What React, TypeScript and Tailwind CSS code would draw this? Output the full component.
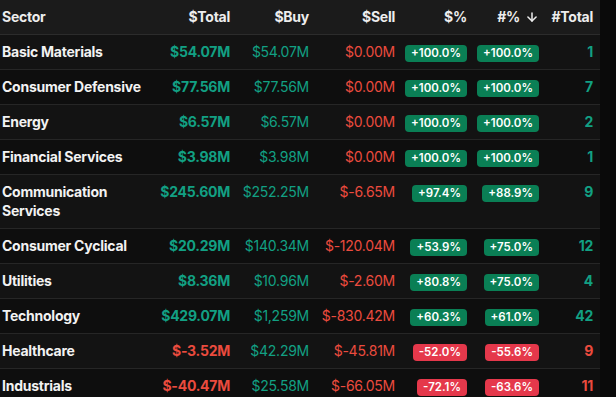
import { ArrowDown } from 'lucide-react';

interface SectorRow {
  sector: string;
  total: string;
  buy: string;
  sell: string;
  pct: number;
  cntPct: number;
  count: number;
}

const rows: SectorRow[] = [
  { sector: 'Basic Materials', total: '$54.07M', buy: '$54.07M', sell: '$0.00M', pct: 100, cntPct: 100, count: 1 },
  { sector: 'Consumer Defensive', total: '$77.56M', buy: '$77.56M', sell: '$0.00M', pct: 100, cntPct: 100, count: 7 },
  { sector: 'Energy', total: '$6.57M', buy: '$6.57M', sell: '$0.00M', pct: 100, cntPct: 100, count: 2 },
  { sector: 'Financial Services', total: '$3.98M', buy: '$3.98M', sell: '$0.00M', pct: 100, cntPct: 100, count: 1 },
  { sector: 'Communication Services', total: '$245.60M', buy: '$252.25M', sell: '$-6.65M', pct: 97.4, cntPct: 88.9, count: 9 },
  { sector: 'Consumer Cyclical', total: '$20.29M', buy: '$140.34M', sell: '$-120.04M', pct: 53.9, cntPct: 75, count: 12 },
  { sector: 'Utilities', total: '$8.36M', buy: '$10.96M', sell: '$-2.60M', pct: 80.8, cntPct: 75, count: 4 },
  { sector: 'Technology', total: '$429.07M', buy: '$1,259M', sell: '$-830.42M', pct: 60.3, cntPct: 61, count: 42 },
  { sector: 'Healthcare', total: '$-3.52M', buy: '$42.29M', sell: '$-45.81M', pct: -52, cntPct: -55.6, count: 9 },
  { sector: 'Industrials', total: '$-40.47M', buy: '$25.58M', sell: '$-66.05M', pct: -72.1, cntPct: -63.6, count: 11 },
];

function Badge({ value }: { value: number }) {
  const positive = value >= 0;
  return (
    <span
      className={`inline-block mt-[1px] rounded-[4px] px-[6px] text-[11.5px] leading-[17px] font-semibold tracking-normal text-white ${
        positive ? 'bg-[#0a7f55]' : 'bg-[#e5384b]'
      }`}
    >
      {positive ? '+' : ''}
      {value.toFixed(1)}%
    </span>
  );
}

export default function App() {
  return (
    <div
      className="w-[616px] h-[397px] overflow-hidden bg-[#0a0a0a]"
      style={{ fontFamily: 'Inter, "Noto Sans", sans-serif' }}
    >
      <table className="w-[600px] table-fixed border-collapse text-[14px] leading-[19.6px] tracking-[-0.25px]">
        <colgroup>
          <col className="w-[155px]" />
          <col className="w-[82px]" />
          <col className="w-[79px]" />
          <col className="w-[86px]" />
          <col className="w-[71px]" />
          <col className="w-[73px]" />
          <col className="w-[54px]" />
        </colgroup>
        <thead>
          <tr className="bg-[#1b1b1b] border-b border-[#2c2c2c] text-[#ededed] font-bold">
            <th className="text-left pl-[2px] h-[34px]">Sector</th>
            <th className="text-right pr-[7px]">$Total</th>
            <th className="text-right pr-[7px]">$Buy</th>
            <th className="text-right pr-[7px]">$Sell</th>
            <th className="text-right pr-[6px]">$%</th>
            <th className="text-right pr-[7px]">
              <span className="inline-flex items-center gap-[5px]">
                #%
                <ArrowDown size={14} strokeWidth={2.6} />
              </span>
            </th>
            <th className="text-right pr-[7px]">#Total</th>
          </tr>
        </thead>
        <tbody>
          {rows.map((r, i) => {
            const totalNeg = r.total.startsWith('$-');
            return (
              <tr
                key={r.sector}
                className={`border-b border-[#262626] ${i % 2 === 0 ? 'bg-[#131313]' : 'bg-[#0e0e0e]'}`}
              >
                <td className="pl-[2px] py-[7px] text-[#f2f2f2] font-bold align-top">{r.sector}</td>
                <td
                  className={`pr-[7px] py-[7px] text-right font-bold align-top ${
                    totalNeg ? 'text-[#eb4b3e]' : 'text-[#12a083]'
                  }`}
                >
                  {r.total}
                </td>
                <td className="pr-[7px] py-[7px] text-right text-[#12a083] align-top">{r.buy}</td>
                <td className="pr-[7px] py-[7px] text-right text-[#eb4b3e] align-top whitespace-nowrap">{r.sell}</td>
                <td className="pr-[6px] py-[7px] text-right align-top">
                  <Badge value={r.pct} />
                </td>
                <td className="pr-[7px] py-[7px] text-right align-top">
                  <Badge value={r.cntPct} />
                </td>
                <td
                  className={`pr-[7px] py-[7px] text-right font-bold align-top ${
                    r.pct >= 0 ? 'text-[#12a083]' : 'text-[#eb4b3e]'
                  }`}
                >
                  {r.count}
                </td>
              </tr>
            );
          })}
        </tbody>
      </table>
    </div>
  );
}
